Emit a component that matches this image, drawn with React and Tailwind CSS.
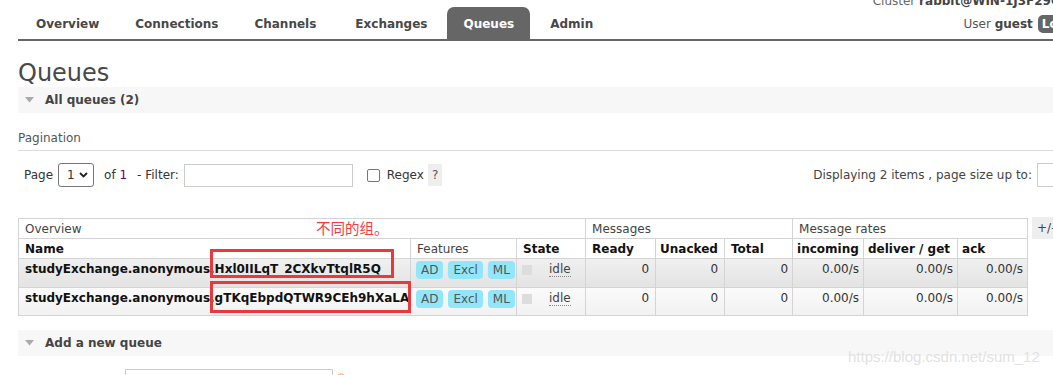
import React from "react";

const tabs = ["Overview", "Connections", "Channels", "Exchanges", "Queues", "Admin"];

const queues = [
  { prefix: "studyExchange.anonymous.", id: "Hxl0IILqT_2CXkvTtqlR5Q", alt: true },
  { prefix: "studyExchange.anonymous.", id: "gTKqEbpdQTWR9CEh9hXaLA", alt: false },
];

const Triangle = () => (
  <svg width="9" height="6" viewBox="0 0 9 6" className="shrink-0">
    <path d="M0 0 L9 0 L4.5 5.5 Z" fill="#aaaaaa" />
  </svg>
);

const Badge = ({ children }) => (
  <span className="inline-flex h-[18px] items-center rounded-[4px] bg-[#92e6fa] px-[5px] text-[12px] text-[#555]">
    {children}
  </span>
);

const th = "whitespace-nowrap border border-[#d4d4d4] px-[6px]";
const td = "whitespace-nowrap border-x border-b border-[#d4d4d4] pt-[1px]";

const App = () => {
  return (
    <div
      className="relative h-[375px] w-[1053px] overflow-hidden bg-white text-[12px] text-[#444]"
      style={{ fontFamily: '"DejaVu Sans", Verdana, sans-serif' }}
    >
      <div className="w-[1104px] pl-[18px]">
        {/* Header */}
        <div className="flex h-[41px] w-[1079px] items-end border-b-2 border-[#666]">
          <ul className="flex items-end">
            {tabs.map((tab) => (
              <li
                key={tab}
                className={
                  (tab === "Queues"
                    ? "rounded-t-[7px] bg-[#666] text-white"
                    : "text-[#484848]") +
                  (tab === "Exchanges" ? " ml-[5px]" : " ml-[2px]") +
                  " mr-[2px] flex h-[32px] items-center px-[16px] pt-[1px] font-bold"
                }
              >
                {tab}
              </li>
            ))}
          </ul>
          <div className="ml-auto flex flex-col items-end self-start">
            <div className="-mt-[6px] h-[14px] leading-[14px] text-[#666]">
              Cluster <b className="text-[#444]">rabbit@WIN-1J3F29OG4K7</b>
            </div>
            <div className="mt-[5px] flex h-[22px] items-center gap-[5px]">
              <span className="text-[#555]">
                User <b className="text-[#444]">guest</b>
              </span>
              <span className="rounded-[5px] bg-[#666] px-[4px] py-[2px] leading-[14px] font-bold text-white">
                Log out
              </span>
            </div>
          </div>
        </div>

        {/* Title */}
        <h1 className="mt-[18px] text-[24px] leading-[28px] text-[#484848]">Queues</h1>
        <div className="flex h-[26px] w-[1035px] items-center gap-[11px] bg-[#f7f7f7] pl-[7px] text-[12px] font-bold text-[#444]">
          <Triangle />
          All queues (2)
        </div>

        {/* Pagination */}
        <div className="mt-[18px] w-[1035px] border-b border-[#ddd] pb-[4px] leading-[15px] text-[#555]">
          Pagination
        </div>
        <div className="mt-[12px] flex w-[1079px] items-center pl-[6px] text-[#333]">
          <span>Page</span>
          <div className="ml-[5px] flex h-[24px] w-[36px] items-center justify-between rounded-[3px] border border-[#777] pl-[8px] pr-[5px]">
            <span>1</span>
            <svg width="9" height="6" viewBox="0 0 9 6">
              <path d="M1 1 L4.5 4.5 L8 1" stroke="#222" strokeWidth="1.8" fill="none" />
            </svg>
          </div>
          <span className="ml-[10px]">
            of <span className="text-[#606]">1</span>
          </span>
          <span className="ml-[10px]">- Filter:</span>
          <div className="ml-[5px] h-[23px] w-[169px] border border-[#ccc]" />
          <div className="ml-[14px] h-[13px] w-[13px] rounded-[2px] border border-[#767676]" />
          <span className="ml-[7px]">Regex</span>
          <span className="ml-[4px] bg-[#eee] px-[4px] py-[2px] text-[#555]">?</span>
          <span className="ml-auto text-[#444]">Displaying 2 items , page size up to:</span>
          <div className="ml-[5px] h-[24px] w-[60px] border border-[#ccc]" />
        </div>

        {/* Table */}
        <div className="relative mt-[31px] flex items-start gap-[4px]">
          <table className="w-[1009px] table-fixed border-collapse text-[12px]">
            <colgroup>
              <col className="w-[392px]" />
              <col className="w-[106px]" />
              <col className="w-[69px]" />
              <col className="w-[70px]" />
              <col className="w-[69px]" />
              <col className="w-[68px]" />
              <col className="w-[71px]" />
              <col className="w-[94px]" />
              <col className="w-[70px]" />
            </colgroup>
            <thead>
              <tr className="h-[20px] text-left text-[#444]">
                <th colSpan={3} className={`${th} font-normal`}>Overview</th>
                <th colSpan={3} className={`${th} font-normal`}>Messages</th>
                <th colSpan={3} className={`${th} font-normal`}>Message rates</th>
              </tr>
              <tr className="h-[20px] text-left text-[#111]">
                <th className={th}>Name</th>
                <th className={`${th} font-normal text-[#444]`}>Features</th>
                <th className={th}>State</th>
                <th className={th}>Ready</th>
                <th className={`${th} !px-[4px]`}>Unacked</th>
                <th className={th}>Total</th>
                <th className={`${th} !px-[4px]`}>incoming</th>
                <th className={`${th} !px-[4px]`}>deliver / get</th>
                <th className={`${th} !px-[4px]`}>ack</th>
              </tr>
            </thead>
            <tbody>
              {queues.map((q) => (
                <tr
                  key={q.id}
                  className={
                    q.alt
                      ? "h-[29px] bg-linear-to-b from-[#f0f0f0] to-[#e3e3e3] align-top"
                      : "h-[28px] bg-linear-to-b from-[#fbfbfb] to-[#f1f1f1] align-top"
                  }
                >
                  <td className={`${td} px-[6px] font-bold text-[#111]`}>
                    {q.prefix}
                    {q.id}
                  </td>
                  <td className="border-x border-b border-[#d4d4d4] px-[5px] pt-[2px]">
                    <div className="flex gap-[5px]">
                      <Badge>AD</Badge>
                      <Badge>Excl</Badge>
                      <Badge>ML</Badge>
                    </div>
                  </td>
                  <td className="border-x border-b border-[#d4d4d4] pl-[5px] pt-[6px]">
                    <div className="flex items-start">
                      <span className="h-[10px] w-[10px] bg-[#ddd]" />
                      <span className="-mt-[3px] ml-[17px] border-b border-dotted border-[#888] leading-[14px] text-[#444]">
                        idle
                      </span>
                    </div>
                  </td>
                  <td className={`${td} px-[6px] text-right text-[#333]`}>0</td>
                  <td className={`${td} px-[6px] text-right text-[#333]`}>0</td>
                  <td className={`${td} px-[4px] text-right text-[#333]`}>0</td>
                  <td className={`${td} px-[4px] text-right text-[#333]`}>0.00/s</td>
                  <td className={`${td} px-[4px] text-right text-[#333]`}>0.00/s</td>
                  <td className={`${td} px-[4px] text-right text-[#333]`}>0.00/s</td>
                </tr>
              ))}
            </tbody>
          </table>
          <span className="-mt-[1px] bg-[#eee] px-[5px] py-[2px] text-[#444]">+/-</span>

          {/* annotation */}
          <span
            className="absolute left-[298px] top-[1px] text-[14.5px] leading-[18px] text-[#f03c3c]"
            style={{ fontFamily: '"Noto Sans CJK SC", sans-serif' }}
          >
            不同的组。
          </span>
          <div className="absolute left-[192px] top-[31px] h-[29px] w-[184px] border-[3px] border-[#e83a3a]" />
          <div className="absolute left-[192px] top-[63px] h-[32px] w-[201px] border-[3px] border-[#e83a3a]" />
        </div>

        {/* Add a new queue */}
        <div className="mt-[14px] flex h-[26px] w-[1035px] items-center gap-[11px] bg-[#f7f7f7] pl-[7px] text-[12px] font-bold text-[#444]">
          <Triangle />
          Add a new queue
        </div>
        <div className="mt-[13px] flex items-start pl-[107px]">
          <div className="h-[24px] w-[208px] border border-[#ccc]" />
          <span className="ml-[5px] text-[#f66]">*</span>
        </div>
      </div>

      <span
        className="absolute left-[848px] top-[346px] text-[15px] text-[#e2e2e2]"
        style={{ fontFamily: '"Liberation Sans", Arial, sans-serif' }}
      >
        https://blog.csdn.net/sum_12
      </span>
    </div>
  );
};

export default App;
